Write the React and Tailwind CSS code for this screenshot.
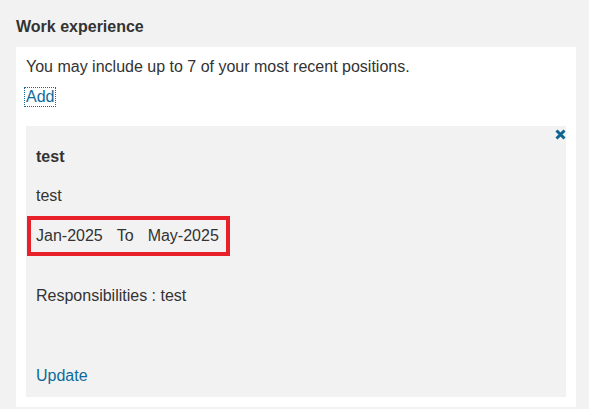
import React from "react";

const WorkExperience = () => {
  return (
    <div className="min-h-[409px] bg-[#f2f2f2] pl-4 pr-[13px] pt-[17px] font-['Liberation_Sans',Arial,sans-serif] text-[16px] text-[#333]">
      {/* Heading */}
      <h2 className="text-[16px] font-bold leading-[20px] text-[#333]">Work experience</h2>

      {/* White panel */}
      <div className="mt-[10px] bg-white px-[10px] pb-[10px] pt-[10px]">
        <p className="leading-[20px]">You may include up to 7 of your most recent positions.</p>
        <div className="mt-[10px] leading-[18px]">
          <a href="#" className="-ml-[2px] inline-block border border-dotted border-[#0e6a9a] px-[1px] text-[#0e6a9a]">
            Add
          </a>
        </div>

        {/* Entry card */}
        <div className="relative mt-[19px] bg-[#f2f2f2] px-[10px] pb-[11px] pt-[21px]">
          <button className="absolute right-0 top-[3px] p-0">
            <svg width="11" height="11" viewBox="0 0 11 11">
              <path d="M1.5 1.5 L9.5 9.5 M9.5 1.5 L1.5 9.5" stroke="#0f6591" strokeWidth="3" strokeLinecap="butt" />
            </svg>
          </button>

          <p className="font-bold leading-[20px]">test</p>
          <p className="mt-[19px] leading-[20px]">test</p>

          <div className="-ml-[9px] mt-[10px] flex h-[40px] w-[203px] items-center border-4 border-[#e8202a] pl-[5px]">
            <span>Jan-2025</span>
            <span className="ml-[14px]">To</span>
            <span className="ml-[14px]">May-2025</span>
          </div>

          <p className="mt-[30px] leading-[20px]">Responsibilities : test</p>

          <a href="#" className="mt-[60px] block leading-[20px] text-[#0e6a9a]">
            Update
          </a>
        </div>
      </div>
    </div>
  );
};

export default function App() {
  return <WorkExperience />;
}
